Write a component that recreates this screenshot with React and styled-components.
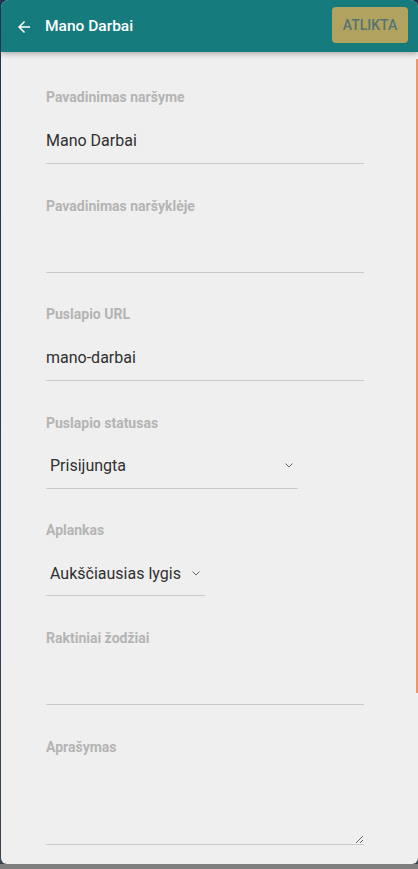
import React from "react";
import styled, { createGlobalStyle } from "styled-components";

const GlobalStyle = createGlobalStyle`
  html, body {
    margin: 0;
    padding: 0;
    height: 100%;
  }
  body {
    font-family: Roboto, "Noto Sans", sans-serif;
    background: linear-gradient(to bottom, #1d3550 0, #3a4550 864px, #7f7f7f 864px);
    overflow: hidden;
  }
`;

const ChevronDown = () => (
  <svg width="8" height="5" viewBox="0 0 8 5" fill="none">
    <polyline points="0.5,0.5 4,4 7.5,0.5" stroke="#666" strokeWidth="1" />
  </svg>
);

const BackArrow = () => (
  <svg width="18" height="18" viewBox="0 0 24 24" fill="#fff">
    <path d="M20 11H7.83l5.59-5.59L12 4l-8 8 8 8 1.41-1.41L7.83 13H20v-2z" />
  </svg>
);

export default function App() {
  return (
    <>
      <GlobalStyle />
      <Panel>
        <Header>
          <BackButton>
            <BackArrow />
          </BackButton>
          <Title>Mano Darbai</Title>
          <DoneButton>Atlikta</DoneButton>
        </Header>
        <Body>
          <Field>
            <Label>Pavadinimas naršyme</Label>
            <TextInput defaultValue="Mano Darbai" />
          </Field>
          <Field>
            <Label>Pavadinimas naršyklėje</Label>
            <TextInput defaultValue="" />
          </Field>
          <Field>
            <Label>Puslapio URL</Label>
            <TextInput defaultValue="mano-darbai" />
          </Field>
          <Field>
            <Label>Puslapio statusas</Label>
            <Select width={252}>
              <SelectValue>Prisijungta</SelectValue>
              <ChevronDown />
            </Select>
          </Field>
          <Field>
            <Label>Aplankas</Label>
            <Select width={159}>
              <SelectValue>Aukščiausias lygis</SelectValue>
              <ChevronDown />
            </Select>
          </Field>
          <Field>
            <Label>Raktiniai žodžiai</Label>
            <TextInput defaultValue="" />
          </Field>
          <Field>
            <Label>Aprašymas</Label>
            <TextArea defaultValue="" />
          </Field>
        </Body>
        <ScrollThumb />
      </Panel>
    </>
  );
}

const Panel = styled.div`
  position: relative;
  margin-left: 1px;
  width: 417px;
  height: 864px;
  display: flex;
  flex-direction: column;
  background: #efefef;
  border-radius: 8px 8px 6px 6px;
  overflow: hidden;
`;

const Header = styled.div`
  position: relative;
  z-index: 1;
  flex: 0 0 52px;
  display: flex;
  align-items: center;
  padding: 0 10px 0 14px;
  background: #167b7c;
  box-shadow: 0 2px 5px rgba(0, 0, 0, 0.28);
`;

const BackButton = styled.div`
  display: flex;
  align-items: center;
  width: 18px;
  height: 18px;
  margin-top: 1px;
`;

const Title = styled.div`
  flex: 1;
  margin-left: 12px;
  color: #fff;
  font-size: 15.5px;
  font-weight: 500;
`;

const DoneButton = styled.button`
  width: 76px;
  height: 36px;
  margin-bottom: 2px;
  border: none;
  border-radius: 4px;
  background: #b1a35f;
  color: #537371;
  font-family: Roboto, sans-serif;
  font-size: 14px;
  font-weight: 500;
  text-transform: uppercase;
  padding: 0;
`;

const Body = styled.div`
  flex: 1;
  overflow: hidden;
  padding: 35px 54px 0 45px;
`;

const ScrollThumb = styled.div`
  position: absolute;
  top: 59px;
  right: 0;
  width: 2px;
  height: 634px;
  background: #f0946a;
`;

const Field = styled.div`
  display: flex;
  flex-direction: column;
  margin-bottom: 31.6px;
`;

const Label = styled.label`
  font-size: 14px;
  line-height: 20px;
  font-weight: 700;
  color: #b4b4b4;
  margin-bottom: 10px;
`;

const TextInput = styled.input`
  box-sizing: border-box;
  width: 318px;
  height: 47px;
  padding: 0;
  border: none;
  border-bottom: 1px solid #c9c9c9;
  background: transparent;
  font-family: Roboto, sans-serif;
  font-size: 16px;
  color: #303030;
  outline: none;
`;

const Select = styled.div`
  box-sizing: border-box;
  width: ${(p) => p.width}px;
  height: 46px;
  display: flex;
  align-items: center;
  justify-content: space-between;
  padding: 1px 5px 0 4px;
  border-bottom: 1px solid #c9c9c9;
`;

const SelectValue = styled.span`
  font-size: 16px;
  color: #303030;
`;

const TextArea = styled.textarea`
  box-sizing: border-box;
  width: 318px;
  height: 78px;
  padding: 0;
  border: none;
  border-bottom: 1px solid #c9c9c9;
  background: transparent;
  font-family: Roboto, sans-serif;
  font-size: 16px;
  outline: none;
  resize: vertical;
`;
